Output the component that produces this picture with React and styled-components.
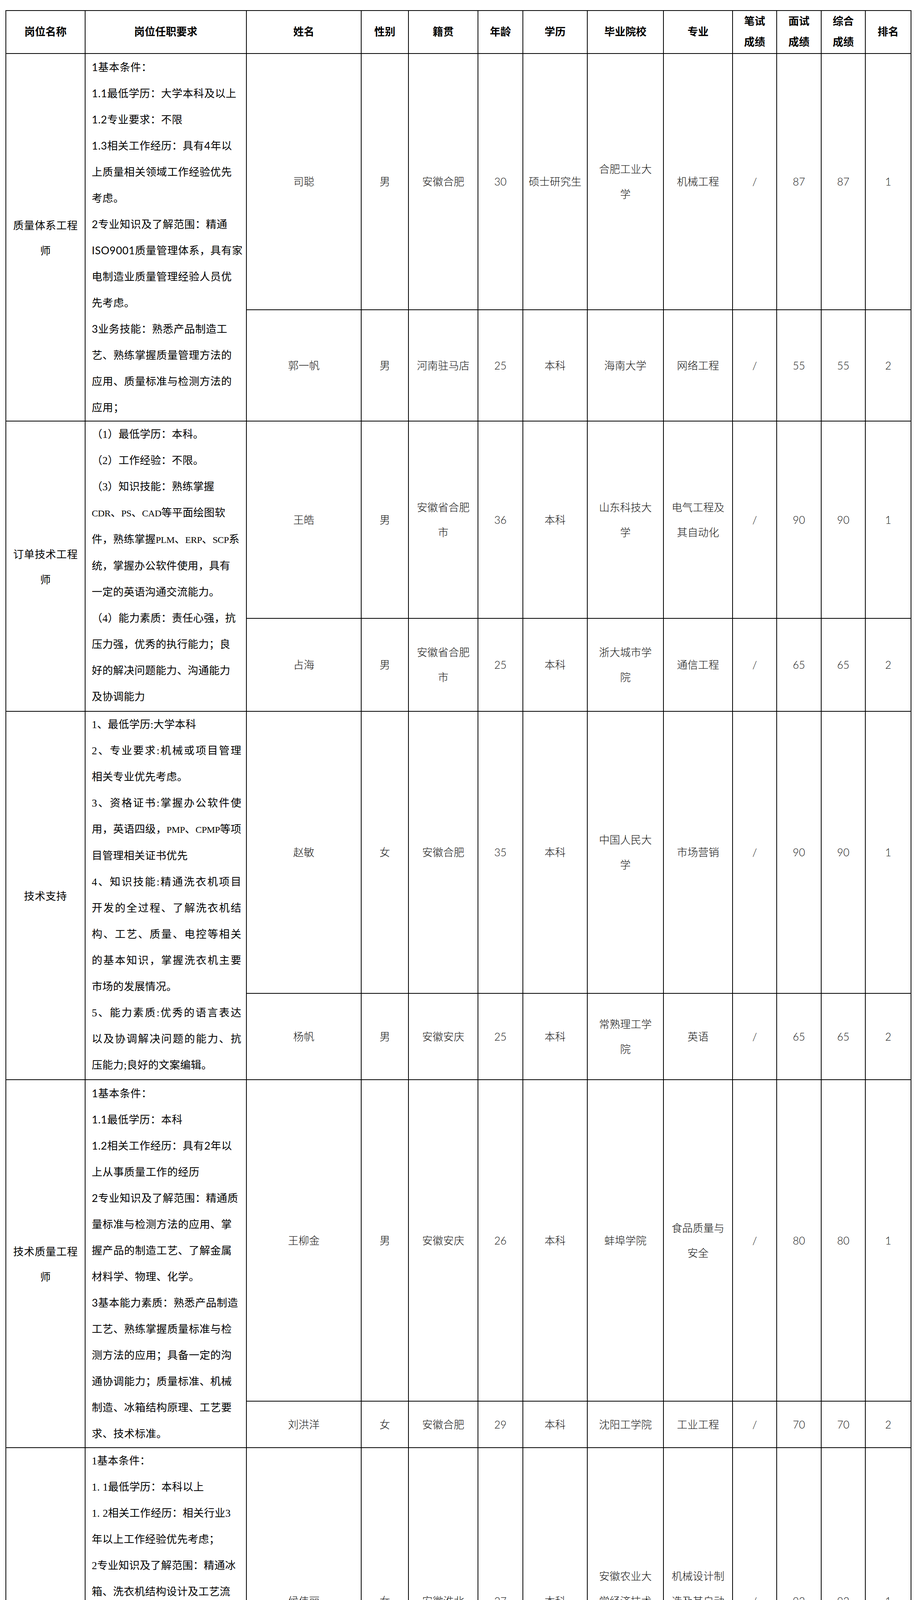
import React from "react";
import styled, { createGlobalStyle } from "styled-components";

const SANS = `"Lato", "Noto Sans CJK SC", sans-serif`;
const SERIF = `"Liberation Serif", "Noto Sans CJK SC", serif`;

const GlobalStyle = createGlobalStyle`
  html, body { margin: 0; padding: 0; background: #fff; }
  body { font-family: ${SANS}; color: #000; }
`;

const Page = styled.div`
  width: 2356px;
  height: 4743px;
  overflow: hidden;
  padding: 26px 0 0 14px;
  box-sizing: border-box;
`;

const Sheet = styled.table`
  border-collapse: collapse;
  table-layout: fixed;
  width: 2320px;
`;

const HeadCell = styled.th`
  border: 2px solid #000;
  height: 108px;
  padding: 0;
  font-family: ${SERIF};
  font-weight: 700;
  font-size: 27px;
  line-height: 53px;
  text-align: center;
  vertical-align: middle;
`;

const Row = styled.tr`
  height: ${(p) => p.$h}px;
`;

const TitleCell = styled.td`
  border: 2px solid #000;
  padding: 0 14px;
  font-family: "Noto Sans CJK SC", sans-serif;
  font-size: 27px;
  line-height: 65px;
  letter-spacing: 0.6px;
  text-align: center;
  vertical-align: middle;
`;

const ReqCell = styled.td`
  border: 2px solid #000;
  padding: 0 12px 0 16px;
  font-family: ${(p) => (p.$serif ? SERIF : SANS)};
  font-size: 27px;
  line-height: 67px;
  letter-spacing: ${(p) => (p.$serif ? "0.3px" : "0.6px")};
  vertical-align: top;
`;

const ReqLine = styled.div`
  white-space: nowrap;
  text-align: left;
  text-align-last: ${(p) => (p.$justify ? "justify" : "left")};
`;

const Latin = styled.span`
  font-family: "Liberation Serif", serif;
  font-size: 24px;
  letter-spacing: -0.4px;
`;

const DataCell = styled.td`
  border: 2px solid #000;
  padding: 0 6px;
  font-family: ${SANS};
  font-size: 27px;
  font-weight: 300;
  line-height: 64px;
  color: #111;
  text-align: center;
  vertical-align: middle;
  white-space: nowrap;
`;

const Footnote = styled.p`
  margin: 0;
  padding: 0 0 0 4px;
  font-family: ${SERIF};
  font-size: 40px;
  line-height: 52px;
  letter-spacing: 8px;
  white-space: nowrap;
`;

const COLS = [203, 413, 294, 121, 178, 115, 165, 195, 177, 113, 114, 113, 117];

const HEADERS = [
  ["岗位名称"],
  ["岗位任职要求"],
  ["姓名"],
  ["性别"],
  ["籍贯"],
  ["年龄"],
  ["学历"],
  ["毕业院校"],
  ["专业"],
  ["笔试", "成绩"],
  ["面试", "成绩"],
  ["综合", "成绩"],
  ["排名"],
];

const GROUPS = [
  {
    title: "质量体系工程师",
    serif: false,
    justify: false,
    req: [
      ["1基本条件："],
      ["1.1最低学历：大学本科及以上"],
      ["1.2专业要求：不限"],
      ["1.3相关工作经历：具有4年以", "上质量相关领域工作经验优先", "考虑。"],
      ["2专业知识及了解范围：精通", "ISO9001质量管理体系，具有家", "电制造业质量管理经验人员优", "先考虑。"],
      ["3业务技能：熟悉产品制造工", "艺、熟练掌握质量管理方法的", "应用、质量标准与检测方法的", "应用；"],
    ],
    people: [
      { h: 656, cells: [["司聪"], ["男"], ["安徽合肥"], ["30"], ["硕士研究生"], ["合肥工业大", "学"], ["机械工程"], ["/"], ["87"], ["87"], ["1"]] },
      { h: 285, cells: [["郭一帆"], ["男"], ["河南驻马店"], ["25"], ["本科"], ["海南大学"], ["网络工程"], ["/"], ["55"], ["55"], ["2"]] },
    ],
  },
  {
    title: "订单技术工程师",
    serif: true,
    justify: false,
    req: [
      ["（1）最低学历：本科。"],
      ["（2）工作经验：不限。"],
      ["（3）知识技能：熟练掌握", "CDR、PS、CAD等平面绘图软", "件，熟练掌握PLM、ERP、SCP系", "统，掌握办公软件使用，具有", "一定的英语沟通交流能力。"],
      ["（4）能力素质：责任心强，抗", "压力强，优秀的执行能力；良", "好的解决问题能力、沟通能力", "及协调能力"],
    ],
    people: [
      { h: 505, cells: [["王皓"], ["男"], ["安徽省合肥", "市"], ["36"], ["本科"], ["山东科技大", "学"], ["电气工程及", "其自动化"], ["/"], ["90"], ["90"], ["1"]] },
      { h: 238, cells: [["占海"], ["男"], ["安徽省合肥", "市"], ["25"], ["本科"], ["浙大城市学", "院"], ["通信工程"], ["/"], ["65"], ["65"], ["2"]] },
    ],
  },
  {
    title: "技术支持",
    serif: true,
    justify: true,
    req: [
      ["1、最低学历:大学本科"],
      ["2、专业要求:机械或项目管理", "相关专业优先考虑。"],
      ["3、资格证书:掌握办公软件使", "用，英语四级，PMP、CPMP等项", "目管理相关证书优先"],
      ["4、知识技能:精通洗衣机项目", "开发的全过程、了解洗衣机结", "构、工艺、质量、电控等相关", "的基本知识，掌握洗衣机主要", "市场的发展情况。"],
      ["5、能力素质:优秀的语言表达", "以及协调解决问题的能力、抗", "压能力;良好的文案编辑。"],
    ],
    people: [
      { h: 722, cells: [["赵敏"], ["女"], ["安徽合肥"], ["35"], ["本科"], ["中国人民大", "学"], ["市场营销"], ["/"], ["90"], ["90"], ["1"]] },
      { h: 221, cells: [["杨帆"], ["男"], ["安徽安庆"], ["25"], ["本科"], ["常熟理工学", "院"], ["英语"], ["/"], ["65"], ["65"], ["2"]] },
    ],
  },
  {
    title: "技术质量工程师",
    serif: false,
    justify: false,
    req: [
      ["1基本条件："],
      ["1.1最低学历：本科"],
      ["1.2相关工作经历：具有2年以", "上从事质量工作的经历"],
      ["2专业知识及了解范围：精通质", "量标准与检测方法的应用、掌", "握产品的制造工艺、了解金属", "材料学、物理、化学。"],
      ["3基本能力素质：熟悉产品制造", "工艺、熟练掌握质量标准与检", "测方法的应用；具备一定的沟", "通协调能力；质量标准、机械", "制造、冰箱结构原理、工艺要", "求、技术标准。"],
    ],
    people: [
      { h: 823, cells: [["王柳金"], ["男"], ["安徽安庆"], ["26"], ["本科"], ["蚌埠学院"], ["食品质量与", "安全"], ["/"], ["80"], ["80"], ["1"]] },
      { h: 119, cells: [["刘洪洋"], ["女"], ["安徽合肥"], ["29"], ["本科"], ["沈阳工学院"], ["工业工程"], ["/"], ["70"], ["70"], ["2"]] },
    ],
  },
  {
    title: "结构工程师",
    serif: true,
    justify: false,
    req: [
      ["1基本条件："],
      ["1. 1最低学历：本科以上"],
      ["1. 2相关工作经历：相关行业3", "年以上工作经验优先考虑；"],
      ["2专业知识及了解范围：精通冰", "箱、洗衣机结构设计及工艺流", "程；掌握机械设计、模具设", "计、制冷系统、电气系统相关", "知识，掌握冰箱、洗衣机主要", "市场的发展情况，了解质量管", "理相关知识、各国制冷类产品", "法律法规及相应标准。"],
      ["3业务技能：熟练掌握UG三维设", "计等绘图软件，掌握办公软件", "使用，英语四级。"],
    ],
    people: [
      { h: 786, cells: [["候伟丽"], ["女"], ["安徽淮北"], ["27"], ["本科"], ["安徽农业大", "学经济技术", "学院"], ["机械设计制", "造及其自动", "化"], ["/"], ["92"], ["92"], ["1"]] },
      { h: 224, cells: [["毕思涛"], ["男"], ["安徽合肥"], ["42"], ["本科"], ["安徽农业大", "学"], ["包装工程"], ["/"], ["85"], ["85"], ["2"]] },
    ],
  },
];

const Lines = ({ lines }) =>
  lines.map((t, i) => (
    <React.Fragment key={i}>
      {i > 0 && <br />}
      {t}
    </React.Fragment>
  ));

const Rich = ({ text, serif }) => {
  if (!serif) return text;
  return text.split(/([A-Za-z]+)/).map((part, i) =>
    /^[A-Za-z]+$/.test(part) ? <Latin key={i}>{part}</Latin> : <React.Fragment key={i}>{part}</React.Fragment>
  );
};

const PersonCells = ({ cells }) =>
  cells.map((c, i) => (
    <DataCell key={i}>
      <Lines lines={c} />
    </DataCell>
  ));

const Group = ({ g }) => {
  const [first, second] = g.people;
  return (
    <>
      <Row $h={first.h}>
        <TitleCell rowSpan={2}>{g.title}</TitleCell>
        <ReqCell rowSpan={2} $serif={g.serif}>
          {g.req.map((para, pi) =>
            para.map((line, li) => (
              <ReqLine key={`${pi}-${li}`} $justify={g.justify && li < para.length - 1}>
                <Rich text={line} serif={g.serif} />
              </ReqLine>
            ))
          )}
        </ReqCell>
        <PersonCells cells={first.cells} />
      </Row>
      <Row $h={second.h}>
        <PersonCells cells={second.cells} />
      </Row>
    </>
  );
};

export default function App() {
  return (
    <Page>
      <GlobalStyle />
      <Sheet>
        <colgroup>
          {COLS.map((w, i) => (
            <col key={i} style={{ width: w }} />
          ))}
        </colgroup>
        <thead>
          <tr>
            {HEADERS.map((h, i) => (
              <HeadCell key={i}>
                <Lines lines={h} />
              </HeadCell>
            ))}
          </tr>
        </thead>
        <tbody>
          {GROUPS.map((g, i) => (
            <Group key={i} g={g} />
          ))}
        </tbody>
      </Sheet>
      <Footnote>公司根据　　　年　　月　　日　　公司期间，本次有最近，请以上通知，使已的方式在长标兰苗股份有限公司上</Footnote>
    </Page>
  );
}
